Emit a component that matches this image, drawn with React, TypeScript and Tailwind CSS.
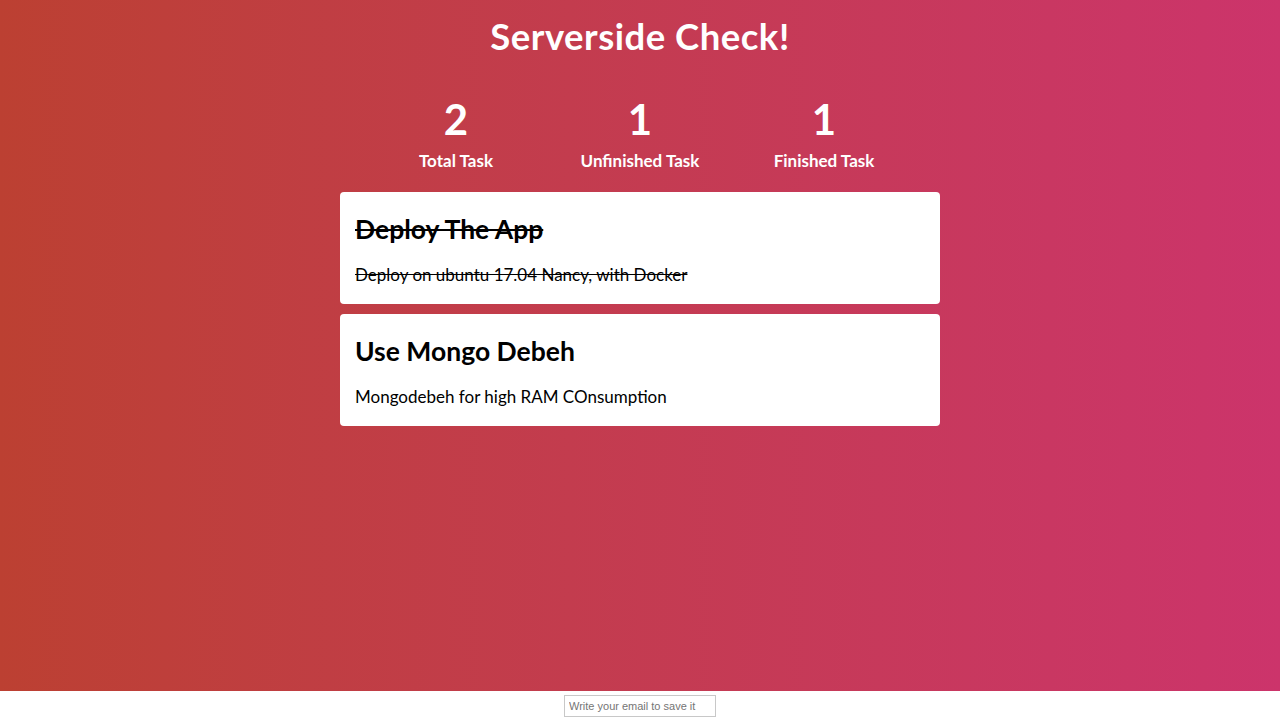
const tasks = [
  { title: "Deploy The App", desc: "Deploy on ubuntu 17.04 Nancy, with Docker", done: true },
  { title: "Use Mongo Debeh", desc: "Mongodebeh for high RAM COnsumption", done: false },
];

const stats = [
  { n: 2, label: "Total Task" },
  { n: 1, label: "Unfinished Task" },
  { n: 1, label: "Finished Task" },
];

export default function App() {
  return (
    <div className="min-h-screen flex flex-col font-['Lato','Open_Sans',sans-serif]">
      <div className="h-[691px] bg-gradient-to-r from-[#bc4032] to-[#cc346b] text-white flex flex-col items-center">
        <h1 className="mt-[13px] text-[36.5px] font-bold leading-[46px] tracking-[0.5px]">Serverside Check!</h1>
        <div className="mt-[38px] flex">
          {stats.map((s) => (
            <div key={s.label} className="w-[184px] flex flex-col items-center">
              <div className="text-[42px] font-bold leading-[44px]">{s.n}</div>
              <div className="mt-[9px] text-[17px] font-bold leading-[22px]">{s.label}</div>
            </div>
          ))}
        </div>
        <div className="mt-[20px] w-[600px] flex flex-col gap-[10px]">
          {tasks.map((t) => (
            <div key={t.title} className="bg-white rounded-[4px] h-[112px] px-[15px] pt-[20px] text-black">
              <h2 className={`text-[26.5px] font-bold leading-[34px] ${t.done ? "line-through" : ""}`}>{t.title}</h2>
              <p className={`mt-[18px] text-[17px] leading-[22px] ${t.done ? "line-through" : ""}`}>{t.desc}</p>
            </div>
          ))}
        </div>
      </div>
      <div className="h-[30px] bg-white flex justify-center items-start pt-[4px]">
        <input
          placeholder="Write your email to save it"
          className="w-[152px] h-[22px] border border-[#c8c8c8] px-[4px] text-[11px] font-['Liberation_Sans',sans-serif] placeholder:text-[#757575] outline-none"
        />
      </div>
    </div>
  );
}
